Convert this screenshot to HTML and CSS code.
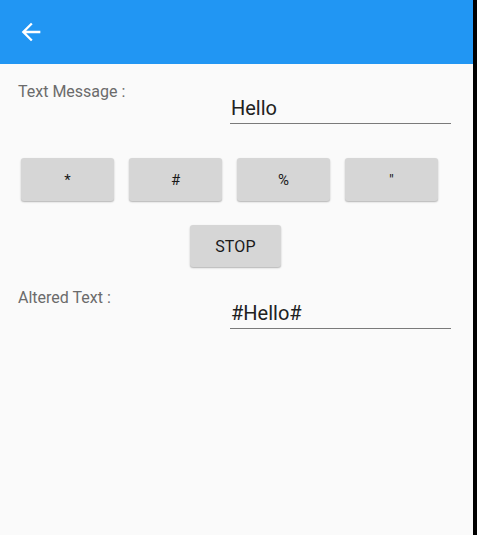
FILE: index.html
```html
<!DOCTYPE html>
<html lang="en">
<head>
<meta charset="utf-8">
<title>Text Alter</title>
<link rel="stylesheet" href="styles.css">
</head>
<body>
<div class="screen">
  <div class="app">
    <header class="appbar">
      <button class="back" aria-label="Back">
        <svg viewBox="0 0 24 24" width="28" height="28"><path d="M20 11H7.83l5.59-5.59L12 4l-8 8 8 8 1.41-1.41L7.83 13H20v-2z" fill="#fff"/></svg>
      </button>
    </header>
    <main class="content">
      <div class="field-row">
        <div class="label">Text Message :</div>
        <div class="field">Hello</div>
      </div>
      <div class="btn-row">
        <button class="btn">*</button>
        <button class="btn">#</button>
        <button class="btn">%</button>
        <button class="btn">"</button>
      </div>
      <div class="stop-row">
        <button class="btn stop">STOP</button>
      </div>
      <div class="field-row altered">
        <div class="label">Altered Text :</div>
        <div class="field">#Hello#</div>
      </div>
    </main>
  </div>
  <div class="edge"></div>
</div>
</body>
</html>
```
FILE: styles.css
```css
* { box-sizing: border-box; }
html, body { margin: 0; padding: 0; }
body {
  width: 477px;
  height: 535px;
  overflow: hidden;
  font-family: Roboto, "Noto Sans", "Liberation Sans", sans-serif;
  background: #000;
}
.screen {
  display: flex;
  height: 535px;
}
.app {
  width: 473px;
  height: 535px;
  background: #fafafa;
  display: flex;
  flex-direction: column;
}
.edge {
  width: 4px;
  background: #000;
}
.appbar {
  height: 64px;
  background: #2196f3;
  display: flex;
  align-items: center;
  padding-left: 17px;
}
.back {
  border: 0;
  background: none;
  padding: 0;
  width: 28px;
  height: 28px;
  display: block;
}
.back svg { display: block; }
.content {
  padding: 19px 22px 0 18px;
  display: flex;
  flex-direction: column;
}
.field-row {
  display: grid;
  grid-template-columns: 212px 221px;
  align-items: start;
}
.label {
  font-size: 16px;
  line-height: 18px;
  color: #6b6b6b;
}
.field {
  margin-top: 13px;
  font-size: 20px;
  line-height: 24px;
  color: #212121;
  padding: 0 0 3px 1px;
  border-bottom: 1px solid #7a7a7a;
}
.btn-row {
  display: flex;
  gap: 15px;
  margin-top: 34px;
  padding-left: 3px;
}
.btn {
  width: 93px;
  height: 43px;
  border: 0;
  border-radius: 3px;
  background: #d6d6d6;
  box-shadow: 0 1px 2px rgba(0,0,0,0.22), 0 1px 1px rgba(0,0,0,0.08);
  font-family: Roboto, "Noto Sans", "Liberation Sans", sans-serif;
  font-size: 15px;
  font-weight: 400;
  color: #1a1a1a;
  padding: 0;
}
.stop-row {
  display: flex;
  justify-content: center;
  margin-top: 24px;
  padding-left: 2px;
}
.btn.stop {
  width: 91px;
  height: 42px;
  font-size: 16px;
  letter-spacing: 0.2px;
}
.altered {
  margin-top: 22px;
}
.altered .field {
  margin-top: 12px;
}
```
